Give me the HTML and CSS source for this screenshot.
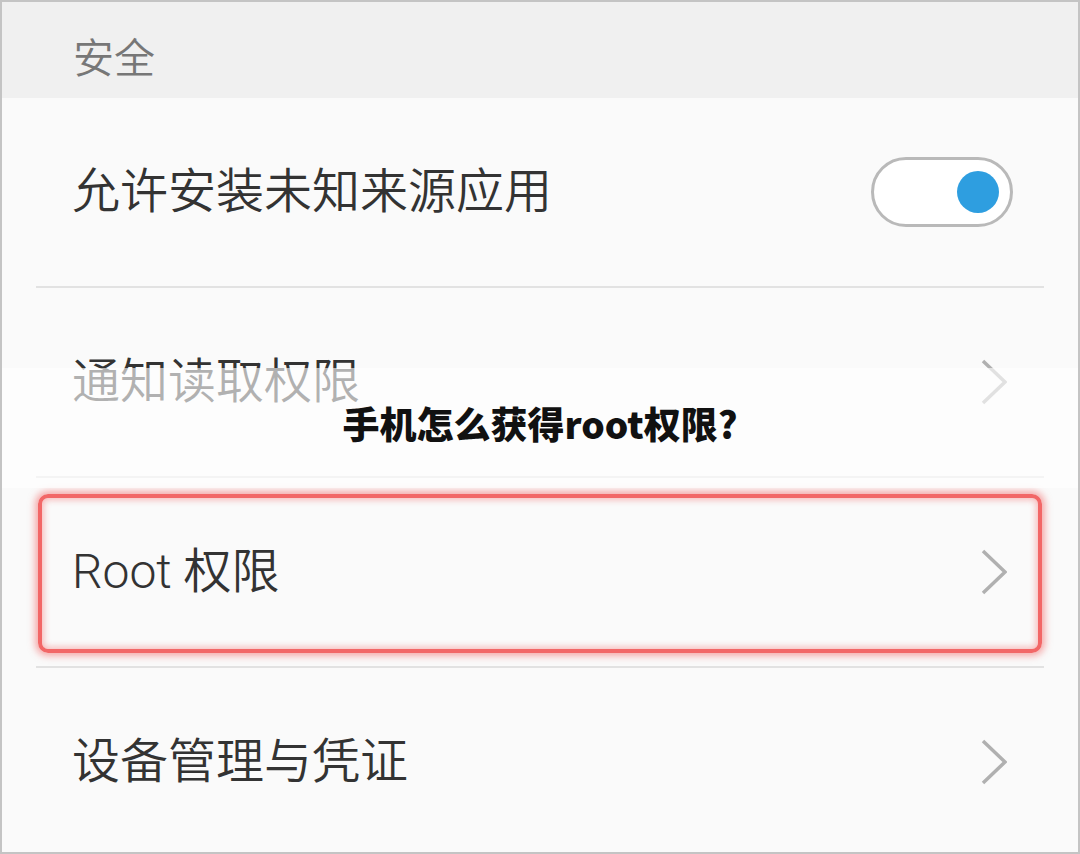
FILE: index.html
```html
<!DOCTYPE html>
<html>
  <head>
    <meta charset="UTF-8" />
    <title>安全</title>
    <link rel="stylesheet" href="styles.css">
  </head>
  <body>
    <div class="frame">
      <div class="section-head">安全</div>

      <div class="list">
        <div class="row">
          <span class="label">允许安装未知来源应用</span>
          <div class="toggle on"><span class="knob"></span></div>
        </div>

        <div class="row">
          <span class="label">通知读取权限</span>
          <svg class="chevron" width="26" height="46" viewBox="0 0 26 46">
            <polyline points="2,2 24,23 2,44" />
          </svg>
        </div>

        <div class="row highlighted">
          <span class="label">Root 权限</span>
          <svg class="chevron" width="26" height="46" viewBox="0 0 26 46">
            <polyline points="2,2 24,23 2,44" />
          </svg>
          <div class="mark"></div>
        </div>

        <div class="row last">
          <span class="label">设备管理与凭证</span>
          <svg class="chevron" width="26" height="46" viewBox="0 0 26 46">
            <polyline points="2,2 24,23 2,44" />
          </svg>
        </div>
      </div>

      <div class="banner">
        <h1>手机怎么获得root权限?</h1>
      </div>
    </div>
  </body>
</html>
```

FILE: styles.css
```css
body {
  margin: 0;
  font-family: Roboto, "Noto Sans CJK SC", sans-serif;
  background: #fafafa;
}

.frame {
  position: relative;
  width: 1080px;
  height: 854px;
  box-sizing: border-box;
  border: 2px solid #c4c4c4;
  background: #fafafa;
  overflow: hidden;
}

.section-head {
  height: 96px;
  box-sizing: border-box;
  display: flex;
  align-items: center;
  padding: 10px 0 0 71px;
  background: #f0f0f0;
  color: #777;
  font-size: 41px;
  font-weight: 350;
}

.list {
  margin: 0 34px;
}

.row {
  position: relative;
  height: 188px;
  display: flex;
  align-items: center;
  justify-content: space-between;
  padding: 0 37px 0 36px;
  border-bottom: 2px solid #e2e2e2;
  color: #333;
  font-size: 48px;
  font-weight: 350;
}

.row.last {
  border-bottom: none;
}

.label {
  line-height: 1;
}

.chevron polyline {
  fill: none;
  stroke: #b0b0b0;
  stroke-width: 3.5;
}

.toggle {
  position: relative;
  width: 142px;
  height: 70px;
  margin-right: -6px;
  box-sizing: border-box;
  border: 3px solid #b9b9b9;
  border-radius: 35px;
  background: #fff;
}

.toggle .knob {
  position: absolute;
  top: 11px;
  right: 11px;
  width: 42px;
  height: 42px;
  border-radius: 50%;
  background: #2e9ee0;
}

.row .mark {
  position: absolute;
  top: 16px;
  bottom: 13px;
  left: 2px;
  right: 2px;
  border: 4px solid #f26767;
  border-radius: 10px;
  box-shadow: 0 0 7px 3px rgba(242, 90, 90, 0.5), inset 0 0 6px 2px rgba(242, 90, 90, 0.4);
}

.banner {
  position: absolute;
  top: 366px;
  left: 0;
  right: 0;
  height: 120px;
  box-sizing: border-box;
  padding-bottom: 10px;
  display: flex;
  align-items: center;
  justify-content: center;
  background: rgba(255, 255, 255, 0.62);
}

.banner h1 {
  margin: 0;
  font-family: "Noto Sans CJK SC", sans-serif;
  font-size: 37px;
  font-weight: 900;
  color: #111;
}
```
